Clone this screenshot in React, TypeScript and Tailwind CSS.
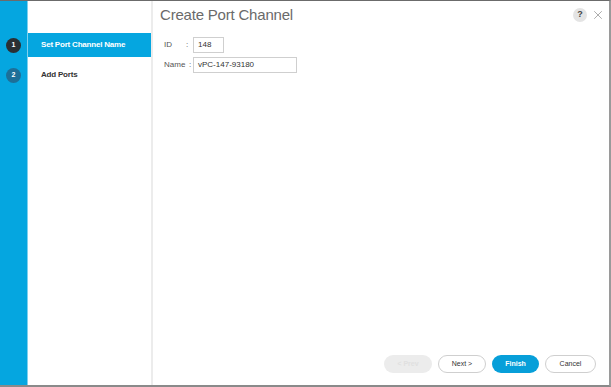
import { X } from "lucide-react";

const steps = [
  { n: 1, label: "Set Port Channel Name", active: true },
  { n: 2, label: "Add Ports", active: false },
];

export default function App() {
  return (
    <div
      className="w-[611px] h-[387px] bg-white flex border-t border-b-2 border-r-2 border-t-[#6b6b6b] border-b-[#8a8a8a] border-r-[#9a9a9a] overflow-hidden"
      style={{ fontFamily: "'Liberation Sans', Arial, sans-serif" }}
    >
      <div className="w-[28px] bg-[#05a6e0] border-r border-r-[#7fd0ee] shrink-0 flex flex-col pt-[32px]">
        {steps.map((s) => (
          <div key={s.n} className="h-[24px] flex items-center justify-center mb-[6px]">
            <div
              className={`w-[15px] h-[15px] rounded-full flex items-center justify-center text-[7px] font-bold text-white ${
                s.active ? "bg-[#2a2f33]" : "bg-[#1d6f98]"
              }`}
            >
              {s.n}
            </div>
          </div>
        ))}
      </div>
      <div className="w-[125px] shrink-0 bg-white flex flex-col pt-[32px] border-r-2 border-r-[#ececec]">
        {steps.map((s) => (
          <div
            key={s.n}
            className={`h-[24px] flex items-center pl-[13px] mb-[6px] text-[8px] font-bold tracking-[-0.2px] ${
              s.active ? "bg-[#05a6e0] text-white" : "text-[#333]"
            }`}
          >
            {s.label}
          </div>
        ))}
      </div>
      <div className="flex-1 bg-white flex flex-col">
        <div className="flex items-center justify-between h-[28px] pl-[7px] pr-[4px]">
          <div className="text-[15px] text-[#6a6a6a] tracking-[-0.2px]">Create Port Channel</div>
          <div className="flex items-center gap-[4px]">
            <div className="w-[14px] h-[14px] rounded-full bg-[#e4e4e4] flex items-center justify-center text-[9px] font-bold text-[#444]">
              ?
            </div>
            <X size={14} strokeWidth={1.2} className="text-[#8a8a8a]" />
          </div>
        </div>
        <div className="flex flex-col gap-[4px] pl-[11px] pt-[8px] text-[8px] text-[#555]">
          <div className="flex items-center">
            <span className="w-[22px]">ID</span>
            <span className="w-[7px]">:</span>
            <div className="w-[31px] h-[16px] border border-[#cfcfcf] flex items-center pl-[4px] text-[#333]">
              148
            </div>
          </div>
          <div className="flex items-center">
            <span className="w-[25px]">Name</span>
            <span className="w-[4px]">:</span>
            <div className="w-[104px] h-[16px] border border-[#cfcfcf] flex items-center pl-[4px] text-[#333]">
              vPC-147-93180
            </div>
          </div>
        </div>
        <div className="flex-1" />
        <div className="flex justify-end gap-[6px] pr-[13px] pb-[12px]">
          <button className="w-[48px] h-[18px] rounded-full bg-[#ececec] text-[7px] text-[#e0e0e0] font-bold">
            &lt; Prev
          </button>
          <button className="w-[48px] h-[18px] rounded-full border border-[#cfcfcf] bg-white text-[7px] text-[#333]">
            Next &gt;
          </button>
          <button className="w-[47px] h-[18px] rounded-full bg-[#079fd9] text-[7px] text-white font-bold">
            Finish
          </button>
          <button className="w-[51px] h-[18px] rounded-full border border-[#cfcfcf] bg-white text-[7px] text-[#333]">
            Cancel
          </button>
        </div>
      </div>
    </div>
  );
}
